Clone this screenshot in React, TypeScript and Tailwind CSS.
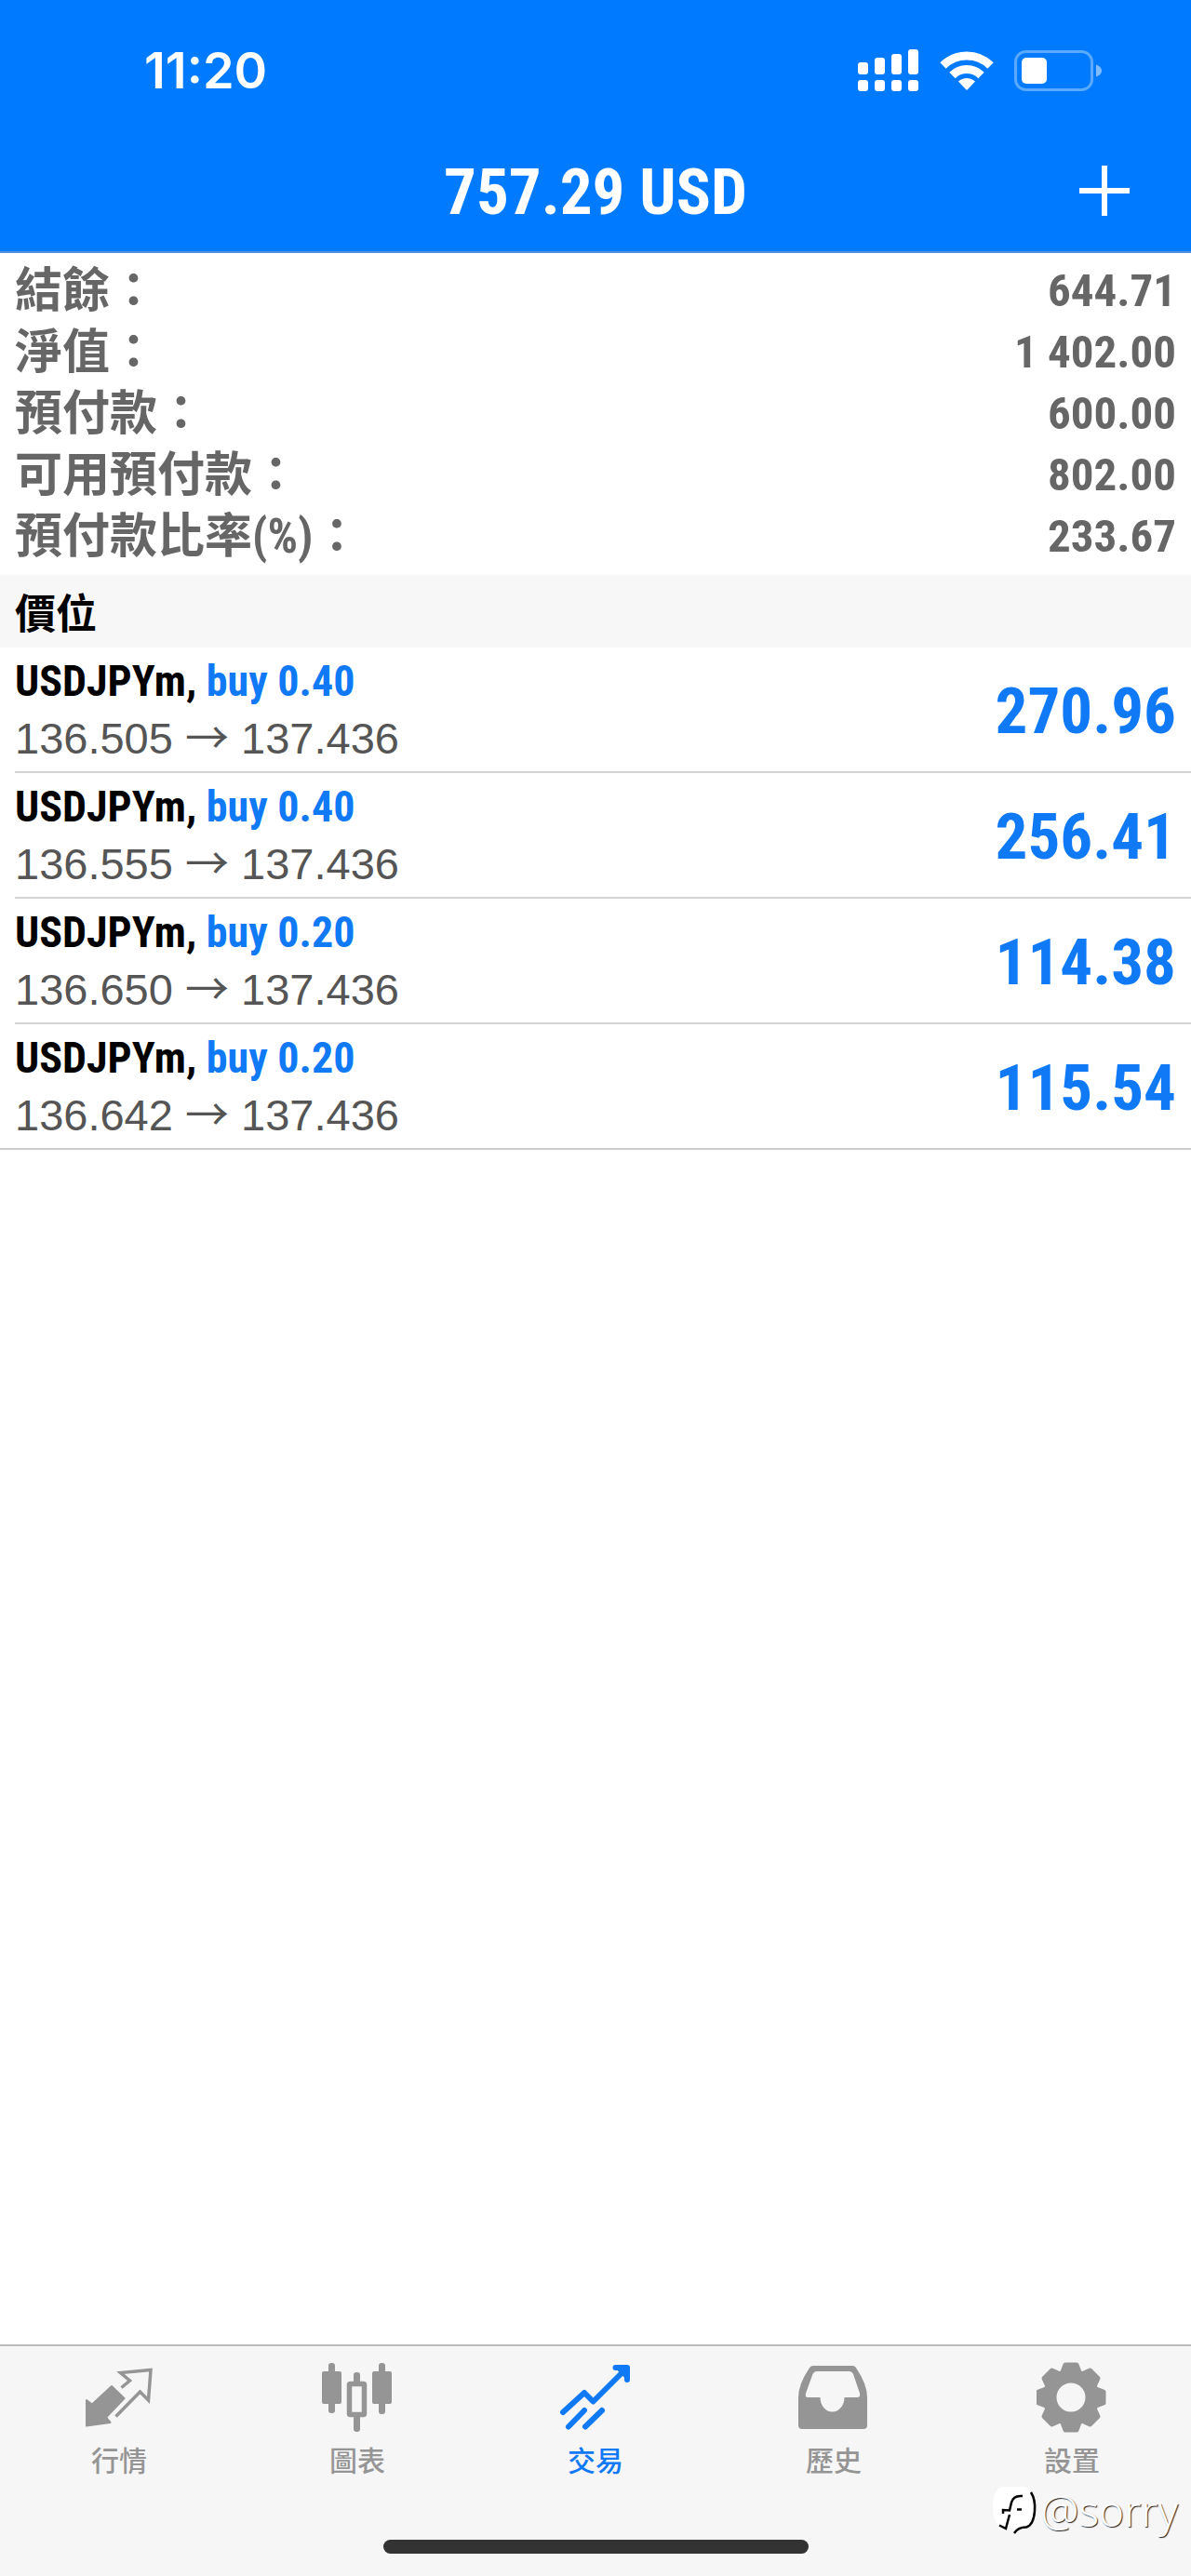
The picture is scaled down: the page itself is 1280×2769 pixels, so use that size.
import type { ReactNode } from 'react'
import { clsx } from 'clsx'

interface Position {
  id: number
  symbol: string
  side: string
  volume: string
  openPrice: string
  currentPrice: string
  profit: string
}

const balanceRows = [
  { label: '結餘：', value: '644.71' },
  { label: '淨值：', value: '1 402.00' },
  { label: '預付款：', value: '600.00' },
  { label: '可用預付款：', value: '802.00' },
  { label: '預付款比率(%)：', value: '233.67' },
]

const positions: Position[] = [
  { id: 1, symbol: 'USDJPYm', side: 'buy', volume: '0.40', openPrice: '136.505', currentPrice: '137.436', profit: '270.96' },
  { id: 2, symbol: 'USDJPYm', side: 'buy', volume: '0.40', openPrice: '136.555', currentPrice: '137.436', profit: '256.41' },
  { id: 3, symbol: 'USDJPYm', side: 'buy', volume: '0.20', openPrice: '136.650', currentPrice: '137.436', profit: '114.38' },
  { id: 4, symbol: 'USDJPYm', side: 'buy', volume: '0.20', openPrice: '136.642', currentPrice: '137.436', profit: '115.54' },
]

function SignalIcon() {
  const bars = [
    { x: 0, y: 14 },
    { x: 18, y: 9 },
    { x: 36, y: 5 },
    { x: 54, y: 0 },
  ]
  return (
    <svg className="h-[46px] w-[66px]" viewBox="0 0 66 46" fill="currentColor" aria-hidden="true">
      {bars.map((bar) => (
        <g key={bar.x}>
          <rect x={bar.x} y={bar.y} width="11" height={27 - bar.y} rx="3" />
          <rect x={bar.x} y="33" width="11" height="12" rx="3" />
        </g>
      ))}
    </svg>
  )
}

function WifiIcon() {
  return (
    <svg className="h-[44px] w-[58px]" viewBox="0 0 58 44" fill="none" stroke="currentColor" strokeWidth="9" aria-hidden="true">
      <path d="M3.5 16.5a36.5 36.5 0 0 1 51 0" />
      <path d="M13.5 27a22 22 0 0 1 31 0" />
      <path d="M20 33.5a13 13 0 0 1 18 0L29.8 42.3q-.8.8-1.6 0Z" fill="currentColor" stroke="none" />
    </svg>
  )
}

function BatteryIcon() {
  return (
    <svg className="h-[44px] w-[94px]" viewBox="0 0 94 44" aria-hidden="true">
      <rect x="1.5" y="1.5" width="82" height="41" rx="11" fill="none" stroke="#59a9ff" strokeWidth="3" />
      <rect x="8" y="8" width="27" height="28" rx="5" fill="#fff" />
      <path d="M88 15.5q6 2 6 6.5t-6 6.5Z" fill="#7fbdff" />
    </svg>
  )
}

function QuotesIcon() {
  return (
    <>
      <path
        d="M3 41l6 4.5L30 26l13.5 13L24 59.5l4.5 5.5L3 68.5Z"
        fill="currentColor"
        stroke="currentColor"
        strokeWidth="2"
        strokeLinejoin="round"
      />
      <path d="M40.5 27.5L49.5 20 39.5 11.5 72 8.5 69.5 41 60.5 32 34.5 58.5" fill="none" stroke="currentColor" strokeWidth="3.5" />
    </>
  )
}

function ChartsIcon() {
  return (
    <g fill="currentColor">
      <rect x="7" y="1" width="7" height="54" rx="3" />
      <rect x="0" y="10" width="21" height="35" rx="2" />
      <rect x="34" y="11" width="7" height="12" rx="3" />
      <rect x="34" y="57" width="7" height="18" rx="3" />
      <rect x="29.5" y="23.5" width="16" height="33" rx="1" fill="none" stroke="currentColor" strokeWidth="5.5" />
      <rect x="61" y="1" width="7" height="55" rx="3" />
      <rect x="54" y="10" width="21" height="35" rx="2" />
    </g>
  )
}

function TradeIcon() {
  return (
    <g fill="none" stroke="currentColor" strokeWidth="6" strokeLinecap="round" strokeLinejoin="round">
      <path d="M3 54L26 33l9.5 9.5L70 8" />
      <path d="M59.5 6H72v13Z" fill="currentColor" strokeWidth="1" />
      <path d="M59.5 6H72v13" />
      <path d="M9 69.5L26 52M27 69.5L45 52" />
    </g>
  )
}

function HistoryIcon() {
  return (
    <path
      fill="currentColor"
      fillRule="evenodd"
      d="M16 4h42q3 0 4.5 3Q74 24 74 38v30q0 4-4 4H4q-4 0-4-4V38Q0 24 11.5 7q1.5-3 4.5-3ZM20 10q-3 0-4.5 3L8 33.5q-1 4.5 2 4.5h13.5a13 15.5 0 0 0 26 0H63q4 0 3-4.5L59 13q-1.5-3-4.5-3Z"
    />
  )
}

function SettingsIcon() {
  const teeth = [0, 45, 90, 135, 180, 225, 270, 315]
  return (
    <g transform="translate(37 38)">
      <circle r="23" fill="none" stroke="currentColor" strokeWidth="15" />
      {teeth.map((angle) => (
        <path
          key={angle}
          transform={`rotate(${angle})`}
          d="M-6-35H6L9-27H-9Z"
          fill="currentColor"
          stroke="currentColor"
          strokeWidth="5"
          strokeLinejoin="round"
        />
      ))}
    </g>
  )
}

const tabs: { label: string; icon: ReactNode; active?: boolean }[] = [
  { label: '行情', icon: <QuotesIcon /> },
  { label: '圖表', icon: <ChartsIcon /> },
  { label: '交易', icon: <TradeIcon />, active: true },
  { label: '歷史', icon: <HistoryIcon /> },
  { label: '設置', icon: <SettingsIcon /> },
]

function Header() {
  return (
    <header className="border-b-2 border-[#4f8fdc] bg-[#007bff] text-white">
      <div className="flex h-[152px] items-center justify-between pr-24 pl-[155px]">
        <time className="font-[Inter,sans-serif] text-[54px] leading-none font-semibold">11:20</time>
        <div className="flex items-center gap-[22px]">
          <SignalIcon />
          <WifiIcon />
          <BatteryIcon />
        </div>
      </div>
      <div className="grid h-[118px] grid-cols-[1fr_auto_1fr] items-start px-[66px]">
        <h1 className="col-start-2 pt-5 text-[69px] leading-none font-bold">757.29 USD</h1>
        <button type="button" aria-label="新訂單" className="mt-[26px] justify-self-end">
          <svg className="size-[54px]" viewBox="0 0 54 54" stroke="currentColor" strokeWidth="6" aria-hidden="true">
            <path d="M27 0v54M0 27h54" />
          </svg>
        </button>
      </div>
    </header>
  )
}

function BalanceSummary() {
  return (
    <dl className="px-4 pt-[7px] pb-[9px] text-[#666]">
      {balanceRows.map((row) => (
        <div key={row.label} className="flex h-[66px] items-center justify-between">
          <dt className="font-['Roboto_Condensed','Noto_Sans_CJK_TC',sans-serif] text-[51px] leading-none font-bold">{row.label}</dt>
          <dd className="text-[49px] leading-none font-bold">{row.value}</dd>
        </div>
      ))}
    </dl>
  )
}

function PositionRow({ position, last }: { position: Position; last: boolean }) {
  return (
    <li className={clsx('pl-4', last && 'border-b-2 border-[#ccc]')}>
      <div className={clsx('flex items-center justify-between pr-4', last ? 'h-[133px]' : 'h-[135px] border-b-2 border-[#d4d4d4]')}>
        <div>
          <p className="text-[46px] leading-[62px] font-bold text-black">
            {position.symbol}, <span className="text-[#1079f6]">{position.side} {position.volume}</span>
          </p>
          <p className="font-['Liberation_Sans',Arial,sans-serif] text-[47px] leading-[62px] text-[#555]">
            {position.openPrice} <span className="font-['Noto_Sans_CJK_TC',sans-serif] leading-none">→</span> {position.currentPrice}
          </p>
        </div>
        <p className="pt-1 text-[69px] leading-none font-bold text-[#1079f6]">{position.profit}</p>
      </div>
    </li>
  )
}

function TabBar() {
  return (
    <nav className="border-t-2 border-[#bbb] bg-[#f6f6f6] pt-[17px]">
      <ul className="grid grid-cols-5">
        {tabs.map((tab) => (
          <li key={tab.label}>
            <a
              href="#"
              aria-current={tab.active ? 'page' : undefined}
              className={clsx('flex flex-col items-center gap-3', tab.active ? 'text-[#1079f6]' : 'text-[#959595]')}
            >
              <svg className="size-[76px]" viewBox="0 0 76 76" aria-hidden="true">
                {tab.icon}
              </svg>
              <span className="font-['Noto_Sans_CJK_TC',sans-serif] text-[30px] leading-8 font-medium">{tab.label}</span>
            </a>
          </li>
        ))}
      </ul>
      <div className="mx-auto mt-[71px] mb-6 h-[15px] w-[457px] rounded-full bg-[#333]" />
    </nav>
  )
}

function Watermark() {
  return (
    <div className="absolute right-3.5 bottom-11 flex items-center gap-1 text-white">
      <svg className="h-[54px] w-[50px]" viewBox="0 0 50 54" fill="none" aria-hidden="true">
        <path d="M12 2h24q10 4 10.5 18 .5 18-8 24l-8 2-4 5-3-5H10Q2 40 2 24 2 5 12 2Z" fill="#fff" />
        <path d="M43 8q5 8 4 20-1 15-9 17.500-9 0-13 6.500" stroke="#000" strokeWidth="2.5" />
        <path d="M34 12q-10-1-12 7l-2 8.500-7-.500v4M20 32l-4 15-7-3.500M28 26.500h5" stroke="#000" strokeWidth="2.5" />
      </svg>
      <span className="font-['Noto_Sans',sans-serif] text-[46px] leading-[54px] font-light [text-shadow:1px_1px_1px_#222]">@sorry</span>
    </div>
  )
}

export default function App() {
  return (
    <div className="relative flex min-h-screen flex-col bg-white font-['Roboto_Condensed','Arial_Narrow',sans-serif]">
      <Header />
      <main className="flex-1">
        <BalanceSummary />
        <h2 className="flex h-[78px] items-center bg-[#f7f7f7] px-4 font-['Noto_Sans_CJK_TC',sans-serif] text-[44px] leading-none font-bold text-black">
          價位
        </h2>
        <ul>
          {positions.map((position, index) => (
            <PositionRow key={position.id} position={position} last={index === positions.length - 1} />
          ))}
        </ul>
      </main>
      <TabBar />
      <Watermark />
    </div>
  )
}
